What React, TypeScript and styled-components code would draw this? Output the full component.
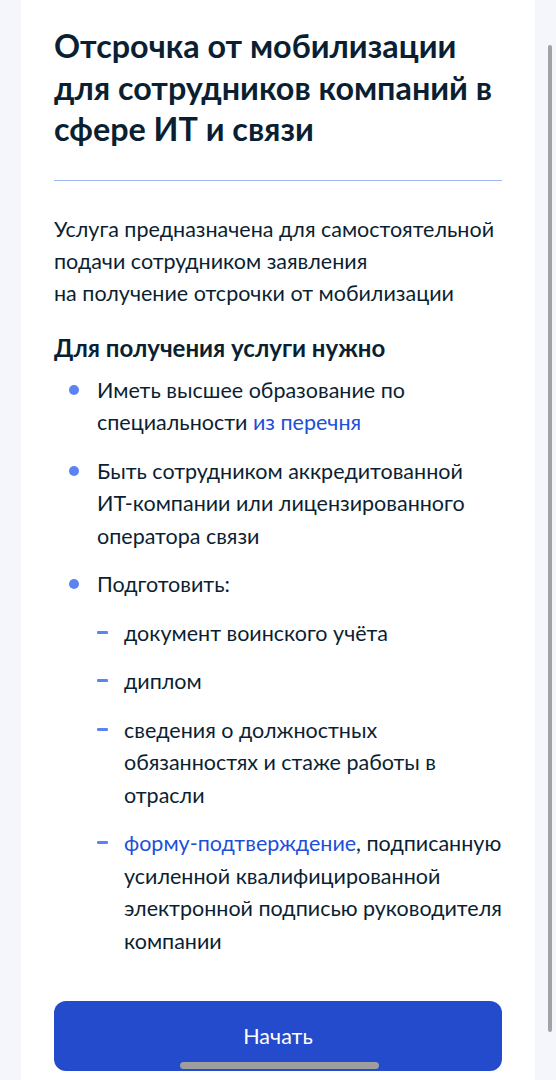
import React from 'react';
import styled, { createGlobalStyle } from 'styled-components';

const GlobalStyle = createGlobalStyle`
  html, body {
    margin: 0;
    padding: 0;
    background: #f4f6fb;
  }
  body {
    font-family: Lato, "Noto Sans", "Liberation Sans", sans-serif;
    color: #0b1f33;
    -webkit-font-smoothing: antialiased;
  }
`

const Page = styled.div`
  padding: 0 21px;
`

const Card = styled.main`
  background: #ffffff;
  min-height: 1080px;
  padding: 25px 33px 0;
  box-sizing: border-box;
`

const Title = styled.h1`
  margin: 0;
  font-size: 32.3px;
  line-height: 41.5px;
  font-weight: 700;
  letter-spacing: 0;
`

const Divider = styled.hr`
  margin: 30px 0 0;
  border: 0;
  height: 1px;
  background: #9db6f2;
`

const Lead = styled.p`
  margin: 32px 0 0;
  font-size: 21.5px;
  line-height: 32px;
`

const Subtitle = styled.h2`
  margin: 23px 0 0;
  font-size: 24px;
  line-height: 32px;
  font-weight: 700;
`

const List = styled.ul<{ $nested?: boolean }>`
  list-style: none;
  margin: ${p => (p.$nested ? '16px 0 0' : '10px 0 0')};
  padding: 0;
  display: flex;
  flex-direction: column;
  gap: 16px;
`

const Item = styled.li`
  display: flex;
  font-size: 21.5px;
  line-height: 32.5px;
`

const Marker = styled.span<{ $nested?: boolean }>`
  flex: 0 0 ${p => (p.$nested ? '27px' : '43px')};
  height: 32.5px;
  display: flex;
  align-items: center;
  justify-content: ${p => (p.$nested ? 'flex-start' : 'flex-end')};
  padding-right: ${p => (p.$nested ? '0' : '18px')};
  box-sizing: border-box;

  &::before {
    content: '';
    display: block;
    background: #5c83f4;
    width: ${p => (p.$nested ? '11px' : '10px')};
    height: ${p => (p.$nested ? '3px' : '10px')};
    border-radius: ${p => (p.$nested ? '1px' : '50%')};
    margin-top: ${p => (p.$nested ? '-1px' : '0')};
  }
`

const Body = styled.div`
  flex: 1;
  min-width: 0;
`

const NoWrap = styled.span`
  white-space: nowrap;
`

const Link = styled.a`
  color: #1d4fd8;
  text-decoration: none;
`

const StartButton = styled.button`
  display: block;
  width: 100%;
  height: 70px;
  margin-top: 44px;
  border: 0;
  border-radius: 12px;
  background: #234bcc;
  color: #ffffff;
  font-family: inherit;
  font-size: 21.5px;
  cursor: pointer;
`

const Scrollbar = styled.div`
  position: fixed;
  top: 45px;
  left: 548px;
  width: 4px;
  height: 987px;
  border-radius: 2px;
  background: #a2a2a2;
`

const HomeIndicator = styled.div`
  position: fixed;
  left: 180px;
  top: 1062px;
  width: 199px;
  height: 7px;
  border-radius: 4px;
  background: #9e9e9e;
`

const subItems: React.ReactNode[] = [
  'документ воинского учёта',
  'диплом',
  'сведения о должностных обязанностях и стаже работы в отрасли',
  <>
    <Link href="#">форму-подтверждение</Link>, подписанную усиленной квалифицированной
    электронной подписью руководителя компании
  </>,
]

export default function App() {
  return (
    <>
      <GlobalStyle />
      <Page>
        <Card>
          <Title>Отсрочка от мобилизации для сотрудников компаний в сфере ИТ и связи</Title>
          <Divider />
          <Lead>
            Услуга предназначена для самостоятельной подачи сотрудником заявления
            <br />
            на получение отсрочки от мобилизации
          </Lead>
          <Subtitle>Для получения услуги нужно</Subtitle>
          <List>
            <Item>
              <Marker />
              <Body>
                Иметь высшее образование по специальности <Link href="#">из перечня</Link>
              </Body>
            </Item>
            <Item>
              <Marker />
              <Body>
                Быть сотрудником аккредитованной <NoWrap>ИТ-компании</NoWrap> или лицензированного
                оператора связи
              </Body>
            </Item>
            <Item>
              <Marker />
              <Body>
                Подготовить:
                <List $nested>
                  {subItems.map((text, i) => (
                    <Item key={i}>
                      <Marker $nested />
                      <Body>{text}</Body>
                    </Item>
                  ))}
                </List>
              </Body>
            </Item>
          </List>
          <StartButton>Начать</StartButton>
        </Card>
      </Page>
      <Scrollbar />
      <HomeIndicator />
    </>
  );
}
